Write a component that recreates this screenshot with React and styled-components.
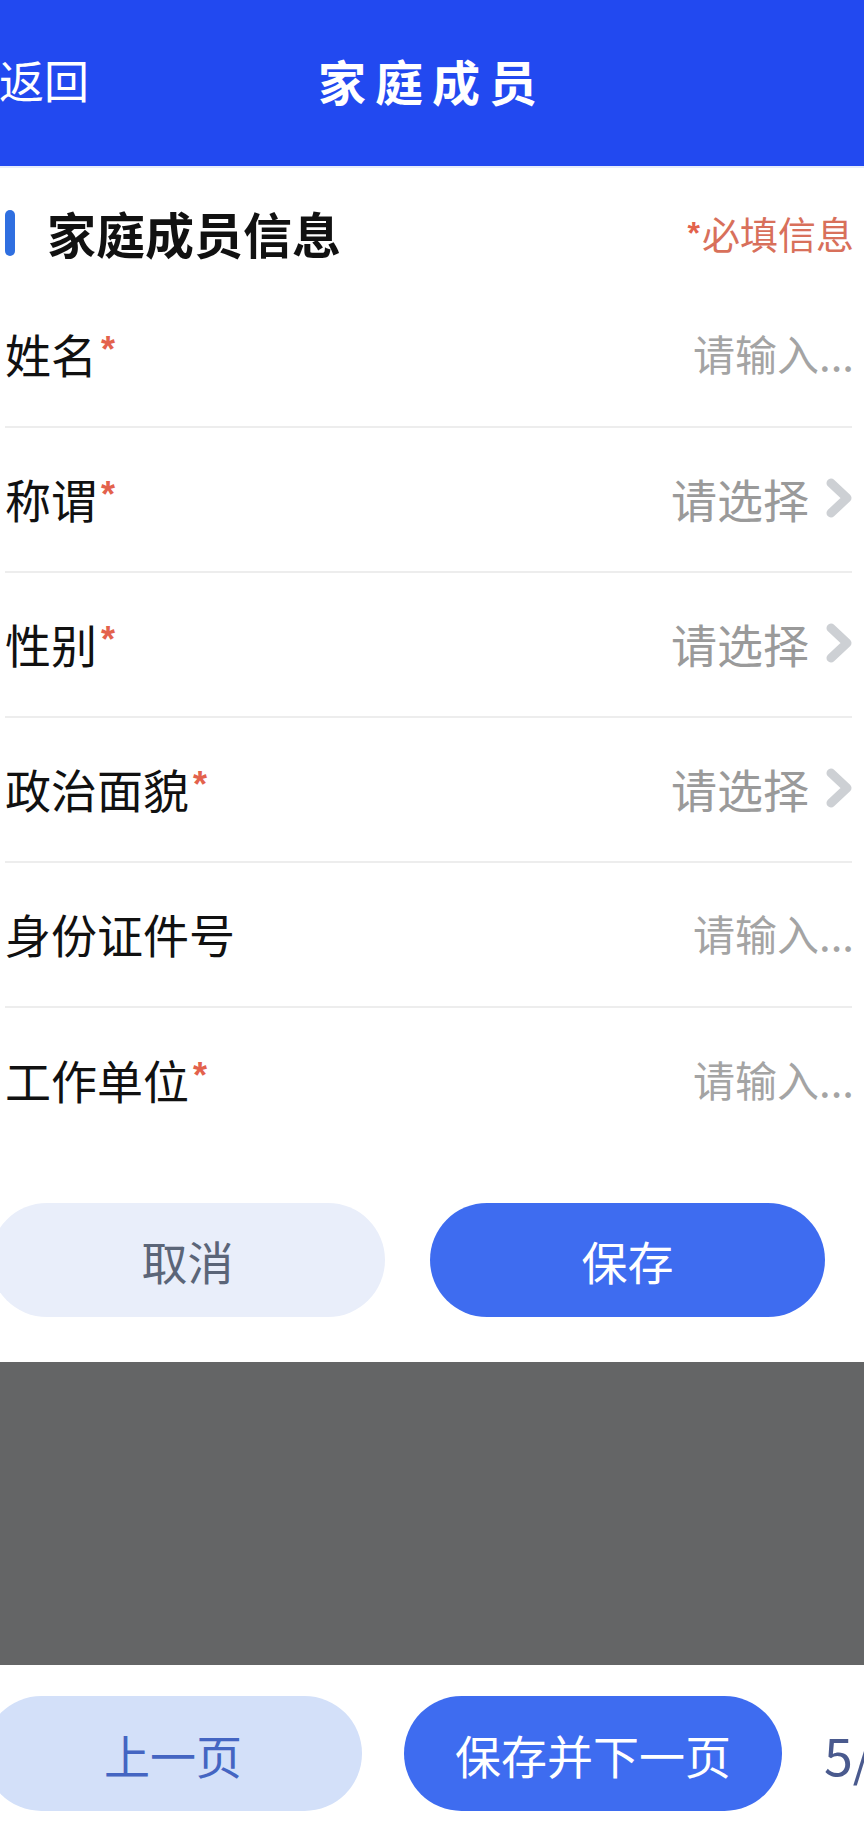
import React from 'react';
import styled, { createGlobalStyle } from 'styled-components';

const GlobalStyle = createGlobalStyle`
  html, body {
    margin: 0;
    padding: 0;
    background: #fff;
  }
  body {
    font-family: "Noto Sans CJK SC", "Noto Sans", sans-serif;
  }
  * { box-sizing: border-box; }
`;

const fields = [
  { label: '姓名', required: true, type: 'input' },
  { label: '称谓', required: true, type: 'select' },
  { label: '性别', required: true, type: 'select' },
  { label: '政治面貌', required: true, type: 'select' },
  { label: '身份证件号', required: false, type: 'input' },
  { label: '工作单位', required: true, type: 'input' },
];

function Chevron() {
  return (
    <ChevronIcon viewBox="0 0 26 40" aria-hidden="true">
      <path d="M5 5 L21 20 L5 35" fill="none" stroke="#cdd0d4" strokeWidth="9" strokeLinecap="round" strokeLinejoin="round" />
    </ChevronIcon>
  );
}

export default function App() {
  return (
    <Page>
      <GlobalStyle />
      <Header>
        <Back>返回</Back>
        <Title>家庭成员</Title>
        <span />
      </Header>

      <Form>
        <SectionHead>
          <SectionTitle>
            <Bar />
            <h2>家庭成员信息</h2>
          </SectionTitle>
          <RequiredNote><NoteStar>*</NoteStar>必填信息</RequiredNote>
        </SectionHead>

        {fields.map((f, i) => (
          <Row key={f.label} last={i === fields.length - 1}>
            <Label>
              {f.label}
              {f.required && <Star>*</Star>}
            </Label>
            {f.type === 'input' ? (
              <InputHint>请输入...</InputHint>
            ) : (
              <SelectHint>
                请选择
                <Chevron />
              </SelectHint>
            )}
          </Row>
        ))}
      </Form>

      <Actions>
        <PillButton variant="light">取消</PillButton>
        <PillButton variant="primary">保存</PillButton>
      </Actions>

      <Mask />

      <Footer>
        <PageButton variant="soft">上一页</PageButton>
        <PageButton variant="primary">保存并下一页</PageButton>
        <PageNum>5/</PageNum>
      </Footer>
    </Page>
  );
}

const Page = styled.div`
  width: 864px;
  min-height: 1833px;
  overflow: hidden;
  background: #fff;
`;

const Header = styled.header`
  height: 168px;
  background: #2249f0;
  border-bottom: 2px solid #e6ecfb;
  display: grid;
  grid-template-columns: 1fr auto 1fr;
  align-items: center;
  padding-bottom: 6px;
  color: #fff;
`;

const Back = styled.div`
  font-size: 45px;
  line-height: 50px;
  margin-left: -1px;
`;

const Title = styled.h1`
  margin: 0;
  font-size: 48px;
  font-weight: 700;
  letter-spacing: 9px;
  line-height: 52px;
`;

const Form = styled.section`
  padding: 0 12px 0 5px;
`;

const SectionHead = styled.div`
  height: 115px;
  display: flex;
  align-items: center;
  justify-content: space-between;
  padding-top: 14px;
`;

const SectionTitle = styled.div`
  display: flex;
  align-items: center;

  > h2 {
    margin: 0 0 0 32px;
    font-size: 49px;
    font-weight: 700;
    line-height: 54px;
    color: #111;
  }
`;

const Bar = styled.span`
  width: 10px;
  height: 46px;
  border-radius: 5px;
  background: #2f6fe0;
`;

const RequiredNote = styled.div`
  font-size: 38px;
  color: #d8705b;
  line-height: 44px;
  display: flex;
  align-items: flex-start;
  margin-right: -2px;
`;

const Star = styled.span`
  color: #e3624c;
  font-size: 36px;
  line-height: 1;
  font-family: "Liberation Sans", sans-serif;
  font-weight: 700;
  margin-top: 5px;
  margin-left: 4px;
`;

const NoteStar = styled(Star)`
  font-size: 32px;
  margin: 6px 2px 0 0;
`;

const Row = styled.div`
  height: 145px;
  display: flex;
  align-items: center;
  justify-content: space-between;
  padding: 0 0 3px 0;
  border-bottom: ${p => (p.last ? 'none' : '2px solid #ededed')};
`;

const Label = styled.div`
  display: flex;
  align-items: flex-start;
  font-size: 46px;
  line-height: 52px;
  color: #111;
`;

const InputHint = styled.div`
  font-size: 42px;
  line-height: 50px;
  color: #a4a4a4;
  margin-right: -2px;
`;

const SelectHint = styled.div`
  display: flex;
  align-items: center;
  gap: 17px;
  font-size: 46px;
  line-height: 52px;
  color: #9a9a9a;
`;

const ChevronIcon = styled.svg`
  width: 26px;
  height: 40px;
`;

const Actions = styled.div`
  display: flex;
  gap: 45px;
  margin: 50px 0 0 -10px;
`;

const PillButton = styled.button`
  flex-shrink: 0;
  width: 395px;
  height: 114px;
  border: none;
  border-radius: 57px;
  font-family: inherit;
  font-size: 46px;
  background: ${p => (p.variant === 'primary' ? '#3e6cf0' : '#e9eefa')};
  color: ${p => (p.variant === 'primary' ? '#fff' : '#5b6578')};
`;

const Mask = styled.div`
  margin-top: 45px;
  height: 303px;
  background: #646566;
`;

const Footer = styled.div`
  display: flex;
  align-items: center;
  gap: 42px;
  margin: 31px 0 0 -16px;
`;

const PageButton = styled.button`
  flex-shrink: 0;
  width: 378px;
  height: 115px;
  border: none;
  border-radius: 58px;
  font-family: inherit;
  font-size: 46px;
  background: ${p => (p.variant === 'primary' ? '#3e6cf0' : '#d3e0f9')};
  color: ${p => (p.variant === 'primary' ? '#fff' : '#4465c2')};
`;

const PageNum = styled.div`
  flex-shrink: 0;
  font-size: 52px;
  color: #4a5a8e;
  white-space: nowrap;
`;
